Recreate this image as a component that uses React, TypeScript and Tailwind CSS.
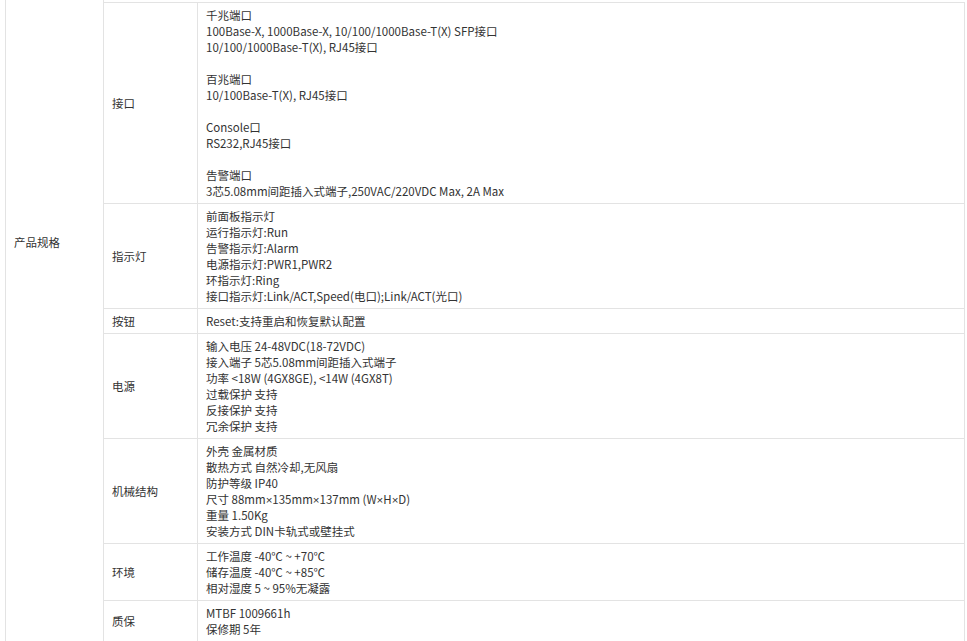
import React from 'react';

type Row = { label: string; lines: string[] };

const rows: Row[] = [
  {
    label: '接口',
    lines: [
      '千兆端口',
      '100Base-X, 1000Base-X, 10/100/1000Base-T(X) SFP接口',
      '10/100/1000Base-T(X), RJ45接口',
      '',
      '百兆端口',
      '10/100Base-T(X), RJ45接口',
      '',
      'Console口',
      'RS232,RJ45接口',
      '',
      '告警端口',
      '3芯5.08mm间距插入式端子,250VAC/220VDC Max, 2A Max',
    ],
  },
  {
    label: '指示灯',
    lines: [
      '前面板指示灯',
      '运行指示灯:Run',
      '告警指示灯:Alarm',
      '电源指示灯:PWR1,PWR2',
      '环指示灯:Ring',
      '接口指示灯:Link/ACT,Speed(电口);Link/ACT(光口)',
    ],
  },
  { label: '按钮', lines: ['Reset:支持重启和恢复默认配置'] },
  {
    label: '电源',
    lines: [
      '输入电压 24-48VDC(18-72VDC)',
      '接入端子 5芯5.08mm间距插入式端子',
      '功率 <18W (4GX8GE), <14W (4GX8T)',
      '过载保护 支持',
      '反接保护 支持',
      '冗余保护 支持',
    ],
  },
  {
    label: '机械结构',
    lines: [
      '外壳 金属材质',
      '散热方式 自然冷却,无风扇',
      '防护等级 IP40',
      '尺寸 88mm×135mm×137mm (W×H×D)',
      '重量 1.50Kg',
      '安装方式 DIN卡轨式或壁挂式',
    ],
  },
  {
    label: '环境',
    lines: ['工作温度 -40℃ ~ +70℃', '储存温度 -40℃ ~ +85℃', '相对湿度 5 ~ 95%无凝露'],
  },
  { label: '质保', lines: ['MTBF 1009661h', '保修期 5年'] },
];

const cell = 'border border-[#e3e3e3] px-2 py-1 align-middle';

// the × sign is narrow in the original, the CJK font draws it full width
const Line = ({ text }: { text: string }) => {
  const parts = text.split('×');
  return (
    <div className="h-4 whitespace-nowrap">
      {parts.map((p, i) => (
        <React.Fragment key={i}>
          {i > 0 && <span className="font-['Liberation_Sans',sans-serif]">×</span>}
          {p}
        </React.Fragment>
      ))}
    </div>
  );
};

export default function App() {
  return (
    <div className="h-[641px] overflow-hidden bg-white font-['Noto_Sans_CJK_SC','Microsoft_YaHei',sans-serif] text-[11.5px] leading-4 text-[#333]">
      <table className="ml-[5px] w-[960px] table-fixed border-collapse">
        <colgroup>
          <col className="w-[98px]" />
          <col className="w-[94px]" />
          <col />
        </colgroup>
        <tbody>
          <tr>
            <td
              rowSpan={rows.length + 1}
              className="border-x border-b border-[#e3e3e3] px-2 pt-[234px] align-top"
            >
              产品规格
            </td>
            <td className="h-[2px] border-b border-[#e3e3e3] p-0" />
            <td className="h-[2px] border-b border-[#e3e3e3] p-0" />
          </tr>
          {rows.map((r) => (
            <tr key={r.label}>
              <td className={cell}>{r.label}</td>
              <td className={cell}>
                {r.lines.map((l, i) => (
                  <Line key={i} text={l} />
                ))}
              </td>
            </tr>
          ))}
        </tbody>
      </table>
    </div>
  );
}
